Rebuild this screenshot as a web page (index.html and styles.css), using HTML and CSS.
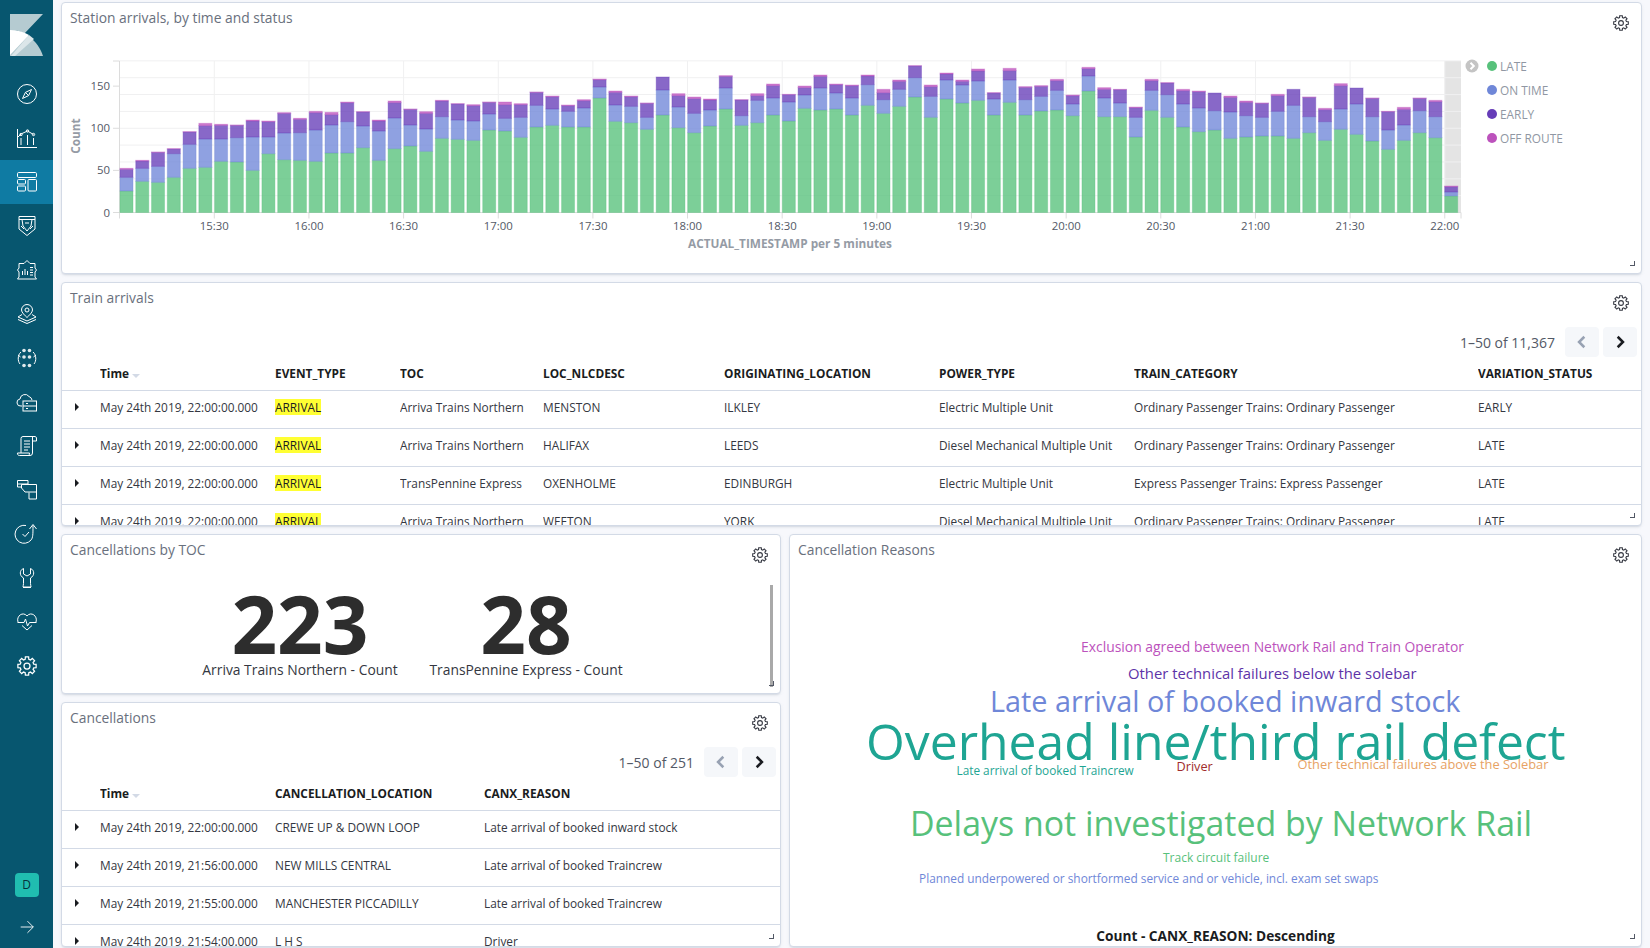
FILE: index.html
```html
<!DOCTYPE html>
<html>
<head>
  <meta charset="utf-8">
  <title>Train dashboard</title>
  <link rel="stylesheet" href="styles.css">
</head>
<body>
  <svg class="sprite" width="0" height="0">
    <symbol id="gear" viewBox="0 0 16 16">
      <path d="M6.55 2.59L6.71 .71H9.29L9.45 2.59L10.8 3.15L12.25 1.94L14.06 3.75L12.85 5.2L13.41 6.55L15.29 6.71V9.29L13.41 9.45L12.85 10.8L14.06 12.25L12.25 14.06L10.8 12.85L9.45 13.41L9.29 15.29H6.71L6.55 13.41L5.2 12.85L3.75 14.06L1.94 12.25L3.15 10.8L2.59 9.45L.71 9.29V6.71L2.59 6.55L3.15 5.2L1.94 3.75L3.75 1.94L5.2 3.15Z"/>
      <circle cx="8" cy="8" r="2.4"/>
    </symbol>
  </svg>

  <nav class="sidenav">
    <div class="logo">
      <svg width="33" height="42" viewBox="0 0 33 42">
        <path class="logo-a" d="M0 0H33L14.5 19.5C10 17 5 16 0 16Z"/>
        <path class="logo-a" d="M0 16C15 16 28 27 33 42H0Z"/>
        <path class="logo-b" d="M19 21L24 25L5 42H1Z"/>
        <path class="logo-c" d="M0 16C7 16 13 17.5 19 21L0 41Z"/>
      </svg>
    </div>
    <a class="nav-item"><svg viewBox="0 0 20 20"><circle cx="10" cy="10" r="9.5"/><path d="M14.5 5.5L11.6 11.6L5.5 14.5L8.4 8.4ZM8.4 8.4L11.6 11.6"/></svg></a>
    <a class="nav-item"><svg viewBox="0 0 20 20"><path d="M.5 1V19.5H20M1 9L4 6L10.5 3L16.5 6.5M4 10V17M10.5 7V17M16.5 10V17"/><circle cx="4" cy="6.5" r="1.2"/><circle cx="10.5" cy="3" r="1.2"/><circle cx="16.5" cy="6.5" r="1.2"/></svg></a>
    <a class="nav-item active"><svg viewBox="0 0 20 20"><rect x=".5" y=".5" width="19" height="5" rx="1.2"/><rect x=".5" y="7.5" width="8" height="4.5" rx="1"/><rect x=".5" y="14" width="8" height="5" rx="1"/><rect x="11" y="7.5" width="8.5" height="11.5" rx="1"/></svg></a>
    <a class="nav-item"><svg viewBox="0 0 20 20"><path d="M2 .5H18V13L10 19.5L2 13ZM2 3.5H18M5 3.5L6 10L10 15L14 10L15 3.5M4 10L7 13M16 10L13 13M8 7H12"/></svg></a>
    <a class="nav-item"><svg viewBox="0 0 20 20"><path d="M10 .5L13 3.5H18V8L19.5 10L18 12V17L19.5 19H.5L2 17V12L.5 10L2 8V3.5H7ZM5.5 11V15M8 9V15M10.5 11V15M13 7.5H16M13 10H16M13 12.5H16M13 15H16"/></svg></a>
    <a class="nav-item"><svg viewBox="0 0 20 20"><path d="M10 .5A5.5 5.5 0 0 1 15.5 6C15.5 8.5 12 11.5 10 13.5C8 11.5 4.5 8.5 4.5 6A5.5 5.5 0 0 1 10 .5Z"/><circle cx="10" cy="6" r="2"/><path d="M5 10.5L1 13L10 17L19 13L15 10.5M1 15.5L10 19.5L19 15.5"/></svg></a>
    <a class="nav-item"><svg viewBox="0 0 20 20"><path d="M4 4C.5 7 .5 13 3 16M16 4C19.5 7 19.5 13 17 16M3.5 9L1 7M16.5 9L19 7"/><g class="solid"><circle cx="7" cy="2.5" r="1.8"/><circle cx="12.5" cy="2.5" r="1.8"/><circle cx="7" cy="9" r="1.8"/><circle cx="12.5" cy="9" r="1.8"/><circle cx="7" cy="17.5" r="1.8"/><circle cx="12.5" cy="17.5" r="1.8"/></g></svg></a>
    <a class="nav-item"><svg viewBox="0 0 20 20"><path d="M5 14H4A3.5 3.5 0 0 1 3 7A5 5 0 0 1 12 4.5A4.5 4.5 0 0 1 15 8"/><rect x="6" y="9" width="13.5" height="10"/><path d="M6 14H19.5M9 11.5H11M9 16.5H11"/></svg></a>
    <a class="nav-item"><svg viewBox="0 0 20 20"><path d="M4 17V2.5A2 2 0 0 1 6 .5H18A2 2 0 0 1 19.5 3V5H15.5M15.5 .8V17A2.5 2.5 0 0 1 13 19.5H2.5A2 2 0 0 1 .5 17H12.5A2 2 0 0 0 13 19.5M7 5H13M7 8H13M7 11H13M7 14H11"/></svg></a>
    <a class="nav-item"><svg viewBox="0 0 20 20"><path d="M.5 .5H11V4H.5ZM.5 4V7H4M4.5 4.5H19.5V12H8L4.5 8ZM12 12.5V19H19.5V12"/></svg></a>
    <a class="nav-item"><svg viewBox="0 0 20 20"><path d="M9 1.5A9 9 0 1 0 14 16C16 14 16 10 16 1.5M12.5 5L16 .5L19.5 5M5.5 10L8 12.5L12 8"/></svg></a>
    <a class="nav-item"><svg viewBox="0 0 20 20"><path d="M6.5 .5C2.5 2 2 7.5 6.5 10V15.5C6.5 17 6 18 6 19H14C14 18 13.5 17 13.5 15.5V10C18 7.5 17.5 2 13.5 .5V6L10 8L6.5 6ZM6 19.5H14"/></svg></a>
    <a class="nav-item"><svg viewBox="0 0 20 20"><path d="M5 13.5L10 18L15 13.5M1 10C-1 4 6 -1 10 4C14 -1 21 4 19 10M.5 10.5H7L8.5 7L10.5 14L12.5 10.5H19.5"/></svg></a>
    <a class="nav-item"><svg viewBox="0 0 16 16"><use href="#gear"/></svg></a>
    <div class="nav-bottom">
      <span class="avatar">D</span>
      <a class="nav-item arrow"><svg viewBox="0 0 20 20"><path d="M3 10H17M10.5 3.5L17 10L10.5 16.5"/></svg></a>
    </div>
  </nav>

  <main class="dashboard">
    <section class="panel panel-chart">
      <h2 class="panel-title">Station arrivals, by time and status</h2>
      <svg class="gear"><use href="#gear"/></svg>
      <div class="chart-row">
        <svg id="arrivals-chart" class="chart"></svg>
        <div class="legend">
          <span class="legend-toggle"><svg viewBox="0 0 14 14" width="14" height="14"><circle cx="7" cy="7" r="6.5"/><path d="M5.5 3.7L8.8 7L5.5 10.3"/></svg></span>
          <ul class="legend-list">
            <li><i class="dot late"></i>LATE</li>
            <li><i class="dot ontime"></i>ON TIME</li>
            <li><i class="dot early"></i>EARLY</li>
            <li><i class="dot offroute"></i>OFF ROUTE</li>
          </ul>
        </div>
      </div>
      <span class="resize"></span>
    </section>

    <section class="panel panel-table">
      <h2 class="panel-title">Train arrivals</h2>
      <svg class="gear"><use href="#gear"/></svg>
      <div class="pager">
        <span>1–50 of 11,367</span>
        <button class="page-btn off"><svg viewBox="0 0 12 12"><path d="M8 1.5L3.5 6L8 10.5"/></svg></button>
        <button class="page-btn"><svg viewBox="0 0 12 12"><path d="M4 1.5L8.5 6L4 10.5"/></svg></button>
      </div>
      <table class="doc-table">
        <colgroup>
          <col class="c-toggle"><col class="c-time"><col class="c-event"><col class="c-toc"><col class="c-loc"><col class="c-orig"><col class="c-power"><col class="c-cat"><col>
        </colgroup>
        <thead>
          <tr><th></th><th>Time<i class="sort"></i></th><th>EVENT_TYPE</th><th>TOC</th><th>LOC_NLCDESC</th><th>ORIGINATING_LOCATION</th><th>POWER_TYPE</th><th>TRAIN_CATEGORY</th><th>VARIATION_STATUS</th></tr>
        </thead>
        <tbody>
          <tr><td><i class="caret"></i></td><td>May 24th 2019, 22:00:00.000</td><td><mark>ARRIVAL</mark></td><td>Arriva Trains Northern</td><td>MENSTON</td><td>ILKLEY</td><td>Electric Multiple Unit</td><td>Ordinary Passenger Trains: Ordinary Passenger</td><td>EARLY</td></tr>
          <tr><td><i class="caret"></i></td><td>May 24th 2019, 22:00:00.000</td><td><mark>ARRIVAL</mark></td><td>Arriva Trains Northern</td><td>HALIFAX</td><td>LEEDS</td><td>Diesel Mechanical Multiple Unit</td><td>Ordinary Passenger Trains: Ordinary Passenger</td><td>LATE</td></tr>
          <tr><td><i class="caret"></i></td><td>May 24th 2019, 22:00:00.000</td><td><mark>ARRIVAL</mark></td><td>TransPennine Express</td><td>OXENHOLME</td><td>EDINBURGH</td><td>Electric Multiple Unit</td><td>Express Passenger Trains: Express Passenger</td><td>LATE</td></tr>
          <tr><td><i class="caret"></i></td><td>May 24th 2019, 22:00:00.000</td><td><mark>ARRIVAL</mark></td><td>Arriva Trains Northern</td><td>WEETON</td><td>YORK</td><td>Diesel Mechanical Multiple Unit</td><td>Ordinary Passenger Trains: Ordinary Passenger</td><td>LATE</td></tr>
        </tbody>
      </table>
      <span class="resize"></span>
    </section>

    <div class="bottom-row">
      <div class="left-col">
        <section class="panel panel-metric">
          <h2 class="panel-title">Cancellations by TOC</h2>
          <svg class="gear"><use href="#gear"/></svg>
          <div class="metrics">
            <div class="metric"><div class="metric-value">223</div><div class="metric-label">Arriva Trains Northern - Count</div></div>
            <div class="metric"><div class="metric-value">28</div><div class="metric-label">TransPennine Express - Count</div></div>
          </div>
          <span class="scrollbar"></span>
          <span class="resize"></span>
        </section>

        <section class="panel panel-table panel-cancel">
          <h2 class="panel-title">Cancellations</h2>
          <svg class="gear"><use href="#gear"/></svg>
          <div class="pager">
            <span>1–50 of 251</span>
            <button class="page-btn off"><svg viewBox="0 0 12 12"><path d="M8 1.5L3.5 6L8 10.5"/></svg></button>
            <button class="page-btn"><svg viewBox="0 0 12 12"><path d="M4 1.5L8.5 6L4 10.5"/></svg></button>
          </div>
          <table class="doc-table">
            <colgroup>
              <col class="c-toggle"><col class="c-time"><col class="c-place"><col>
            </colgroup>
            <thead>
              <tr><th></th><th>Time<i class="sort"></i></th><th>CANCELLATION_LOCATION</th><th>CANX_REASON</th></tr>
            </thead>
            <tbody>
              <tr><td><i class="caret"></i></td><td>May 24th 2019, 22:00:00.000</td><td>CREWE UP &amp; DOWN LOOP</td><td>Late arrival of booked inward stock</td></tr>
              <tr><td><i class="caret"></i></td><td>May 24th 2019, 21:56:00.000</td><td>NEW MILLS CENTRAL</td><td>Late arrival of booked Traincrew</td></tr>
              <tr><td><i class="caret"></i></td><td>May 24th 2019, 21:55:00.000</td><td>MANCHESTER PICCADILLY</td><td>Late arrival of booked Traincrew</td></tr>
              <tr><td><i class="caret"></i></td><td>May 24th 2019, 21:54:00.000</td><td>L H S</td><td>Driver</td></tr>
            </tbody>
          </table>
          <span class="resize"></span>
        </section>
      </div>

      <section class="panel panel-cloud">
        <h2 class="panel-title">Cancellation Reasons</h2>
        <svg class="gear"><use href="#gear"/></svg>
        <span class="word w-exclusion">Exclusion agreed between Network Rail and Train Operator</span>
        <span class="word w-below">Other technical failures below the solebar</span>
        <span class="word w-inward">Late arrival of booked inward stock</span>
        <span class="word w-overhead">Overhead line/third rail defect</span>
        <span class="word w-crew">Late arrival of booked Traincrew</span>
        <span class="word w-driver">Driver</span>
        <span class="word w-above">Other technical failures above the Solebar</span>
        <span class="word w-delays">Delays not investigated by Network Rail</span>
        <span class="word w-track">Track circuit failure</span>
        <span class="word w-planned">Planned underpowered or shortformed service and or vehicle, incl. exam set swaps</span>
        <div class="cloud-label">Count - CANX_REASON: Descending</div>
        <span class="resize"></span>
      </section>
    </div>
  </main>

  <script src="chart.js"></script>
</body>
</html>
```

FILE: styles.css
```css
* { box-sizing: border-box; }

html, body { height: 100%; }

body {
  margin: 0;
  display: flex;
  overflow: hidden;
  background: #f7f8fc;
  color: #343741;
  font-family: "Open Sans", "Liberation Sans", sans-serif;
  font-size: 11.85px;
}

.sprite { position: absolute; }

/* side nav */
.sidenav {
  width: 53px;
  flex: none;
  display: flex;
  flex-direction: column;
  background: #07566f;
}
.logo { height: 72px; padding: 14px 0 0 10px; }
.logo svg { display: block; }
.logo-a { fill: #b5cbd1; }
.logo-b { fill: #dbe6e9; }
.logo-c { fill: #fff; }

.nav-item {
  height: 44px;
  flex: none;
  display: flex;
  align-items: center;
  justify-content: center;
}
.nav-item svg {
  width: 20px;
  height: 20px;
  fill: none;
  stroke: #fff;
  stroke-width: 1;
  overflow: visible;
}
.nav-item .solid { fill: #dfe9ec; stroke: none; }
.nav-item.active { background: #0f7ba3; }
.nav-bottom { margin-top: auto; display: flex; flex-direction: column; align-items: center; }
.avatar {
  width: 24px;
  height: 24px;
  margin-bottom: 9px;
  border-radius: 4px;
  background: #20bdb0;
  color: #07303c;
  font-size: 12px;
  line-height: 24px;
  text-align: center;
}
.arrow { height: 42px; }
.arrow svg { width: 18px; height: 18px; }

/* grid */
.dashboard {
  flex: 1;
  min-width: 0;
  display: flex;
  flex-direction: column;
  gap: 8px;
  padding: 2px 8px 0;
}
.bottom-row { flex: 1; min-height: 0; display: flex; gap: 8px; padding-bottom: 1px; }
.left-col { width: 720px; flex: none; display: flex; flex-direction: column; gap: 8px; }

.panel {
  position: relative;
  overflow: hidden;
  background: #fff;
  border: 1px solid #d3dae6;
  border-radius: 4px;
  box-shadow: 0 2px 2px -1px rgba(152, 162, 179, .3), 0 1px 5px -2px rgba(152, 162, 179, .3);
}
.panel-chart { height: 272px; flex: none; }
.dashboard > .panel-table { height: 244px; flex: none; }
.panel-metric { height: 160px; flex: none; }
.panel-cancel { flex: 1; min-height: 0; }
.panel-cloud { flex: 1; min-width: 0; }

.panel-title {
  margin: 0;
  padding: 5px 8px 0;
  height: 31px;
  color: #69707d;
  font-size: 13.85px;
  font-weight: 400;
  line-height: 20px;
}
.gear {
  position: absolute;
  top: 12px;
  right: 12px;
  width: 16px;
  height: 16px;
  fill: none;
  stroke: #343741;
  stroke-width: 1.1;
}
.resize {
  position: absolute;
  right: 6px;
  bottom: 7px;
  width: 5px;
  height: 5px;
  border-right: 1px solid #535966;
  border-bottom: 1px solid #535966;
}

/* chart */
.chart-row { display: flex; }
.chart { width: 1404px; height: 220px; flex: none; display: block; }
.chart .grid { stroke: #f0f0f1; stroke-width: 1; }
.chart .axis { stroke: #dcdcdc; stroke-width: 1; }
.chart .endzone { fill: #e4e4e4; }
.chart .bar { fill-opacity: .78; stroke-opacity: .35; stroke-width: 1; }
.chart text { font-family: "Open Sans", "Liberation Sans", sans-serif; font-size: 11.4px; fill: #535966; }
.chart .tick-y { text-anchor: end; }
.chart .tick-x { text-anchor: middle; }
.chart .title { font-size: 11.8px; font-weight: 700; fill: #959ba5; text-anchor: middle; }

.legend { display: flex; padding-top: 20px; margin-left: -1px; }
.legend-toggle { display: block; margin-top: 5px; height: 14px; }
.legend-toggle circle { fill: #c4c4c4; }
.legend-toggle path { fill: none; stroke: #fff; stroke-width: 2; }
.legend-list { margin: 0 0 0 8px; padding: 0; list-style: none; color: #9097a3; font-size: 11.85px; }
.legend-list li { height: 24px; display: flex; align-items: center; }
.dot { width: 10px; height: 10px; margin-right: 3px; border-radius: 50%; }
.late { background: #57c17b; }
.ontime { background: #6f87d8; }
.early { background: #663db8; }
.offroute { background: #bc52bc; }

/* doc tables */
.pager {
  height: 30px;
  margin-top: 13px;
  padding-right: 4px;
  display: flex;
  align-items: center;
  justify-content: flex-end;
  gap: 4px;
  color: #535966;
  font-size: 14px;
}
.pager span { margin-right: 6px; }
.page-btn {
  width: 34px;
  height: 30px;
  padding: 0;
  border: 0;
  border-radius: 4px;
  background: #f5f7fa;
  display: flex;
  align-items: center;
  justify-content: center;
}
.page-btn svg { width: 14px; height: 14px; fill: none; stroke: #1a1c21; stroke-width: 2.2; }
.page-btn.off svg { stroke: #98a2b3; }

.doc-table { width: 100%; table-layout: fixed; border-collapse: collapse; }
.c-toggle { width: 38px; }
.c-time { width: 175px; }
.c-event { width: 125px; }
.c-toc { width: 143px; }
.c-loc { width: 181px; }
.c-orig { width: 215px; }
.c-power { width: 195px; }
.c-cat { width: 344px; }
.c-place { width: 209px; }
.doc-table th,
.doc-table td { padding: 0; text-align: left; white-space: nowrap; overflow: hidden; }
.doc-table th {
  height: 33px;
  padding-bottom: 0;
  color: #1a1c21;
  font-weight: 700;
  border-bottom: 1px solid #d3dae6;
}
.doc-table td {
  height: 38px;
  padding-bottom: 5px;
  border-bottom: 1px solid #d3dae6;
}
.doc-table mark { background: #ffff33; color: #1a1c21; }
.caret {
  display: block;
  width: 0;
  height: 0;
  margin-left: 13px;
  border-left: 4px solid #1a1c21;
  border-top: 4px solid transparent;
  border-bottom: 4px solid transparent;
}
.sort {
  display: inline-block;
  margin-left: 3px;
  border-top: 4px solid #d3dae6;
  border-left: 4px solid transparent;
  border-right: 4px solid transparent;
}

/* metric */
.metrics { display: flex; justify-content: center; padding: 17px 16px 0 0; }
.metric { width: 226px; text-align: center; }
.metric-value { color: #2d2d2d; font-size: 80px; font-weight: 700; line-height: 80px; }
.metric-label { margin-top: -3px; color: #343741; font-size: 13.85px; line-height: 20px; }
.scrollbar {
  position: absolute;
  top: 50px;
  right: 7px;
  width: 3px;
  bottom: 6px;
  background: #a9a9a9;
}

/* word cloud */
.word { position: absolute; white-space: nowrap; line-height: 1; transform: translateY(-50%); }
.w-exclusion { left: 291px; top: 112px; font-size: 13.9px; color: #bc52bc; }
.w-below { left: 338px; top: 137.5px; font-size: 14.85px; color: #5d33a8; }
.w-inward { left: 200px; top: 166px; font-size: 28.8px; color: #6f87d8; }
.w-overhead { left: 76px; top: 206.5px; font-size: 49.85px; color: #1ea593; }
.w-crew { left: 166.5px; top: 236px; font-size: 11.8px; color: #1ea593; }
.w-driver { left: 386.5px; top: 231px; font-size: 12.7px; color: #a02c2c; }
.w-above { left: 507.5px; top: 229px; font-size: 12.85px; color: #e7a264; }
.w-delays { left: 120px; top: 289px; font-size: 33.9px; color: #57c17b; }
.w-track { left: 373px; top: 323px; font-size: 12px; color: #57c17b; }
.w-planned { left: 129px; top: 344px; font-size: 11.87px; color: #6f87d8; }
.cloud-label {
  position: absolute;
  left: 0;
  right: 0;
  bottom: 0;
  color: #1a1c21;
  font-size: 13.7px;
  font-weight: 700;
  line-height: 20px;
  text-align: center;
}
```

FILE: chart.js
```js
// top edge of each stack segment, read off at 3x above the plot: late, on time, early, off route
var bars = [
  [423,382,358,355],[394,355,333,331],[397,349,307,306],[382,311,297,296],[355,283,246,245],
  [352,267,227,220],[334,267,226,223],[336,263,226,225],[361,261,213,210],[311,261,215,213],
  [329,249,190,188],[331,248,208,205],[334,240,188,184],[309,225,194,187],[309,215,158,156],
  [293,228,186,185],[331,243,213,210],[296,204,158,153],[288,225,178,177],[304,237,190,185],
  [265,200,153,151],[268,210,162,161],[271,213,167,164],[240,192,157,156],[243,205,164,156],
  [262,202,164,161],[231,166,127,126],[226,177,140,138],[231,184,167,165],[231,174,152,149],
  [144,111,89,87],[214,165,127,123],[218,169,140,138],[238,202,160,159],[195,120,81,81],
  [233,171,137,131],[248,190,146,141],[228,180,150,147],[177,114,79,77],[226,197,150,149],
  [218,151,137,131],[195,144,107,102],[213,156,134,133],[175,135,113,108],[180,114,79,75],
  [177,129,104,102],[195,144,107,105],[166,104,78,75],[190,149,128,118],[169,118,94,90],
  [141,83,48,47],[202,139,110,105],[147,90,72,69],[159,105,94,90],[151,93,63,57],
  [195,147,129,128],[157,90,62,55],[195,149,112,110],[183,139,109,107],[180,121,92,88],
  [197,162,137,135],[123,78,56,52],[200,144,118,113],[200,159,119,118],[261,202,173,171],
  [181,121,92,88],[202,134,99,98],[231,162,122,118],[245,174,125,123],[240,182,129,129],
  [265,186,142,138],[261,197,157,153],[258,202,160,159],[258,184,137,133],[265,166,118,118],
  [248,200,142,141],[271,215,179,175],[238,177,107,101],[253,162,114,114],[273,200,145,144],
  [298,240,185,184],[271,225,178,172],[248,182,145,144],[263,200,155,151],[438,426,410,408]
];
var colors = ["#57c17b", "#6f87d8", "#663db8", "#bc52bc"];
var times = ["15:30","16:00","16:30","17:00","17:30","18:00","18:30","19:00","19:30","20:00","20:30","21:00","21:30","22:00"];

var svg = document.getElementById("arrivals-chart");
// the plot uses page coordinates, so the numbers below read straight off the screenshot
svg.setAttribute("viewBox", "62 34 1404 220");

var left = 119.5, right = 1461, top_ = 61, base = 212.5, slot = 15.77;

function add(name, attrs, text) {
  var el = document.createElementNS("http://www.w3.org/2000/svg", name);
  for (var k in attrs) el.setAttribute(k, attrs[k]);
  if (text) el.textContent = text;
  svg.appendChild(el);
  return el;
}

function line(x1, y1, x2, y2, cls) {
  add("line", { x1: x1, y1: y1, x2: x2, y2: y2, "class": cls });
}

add("rect", { x: 1444.5, y: top_, width: right - 1444.5, height: base - top_, "class": "endzone" });

for (var i = 0; i <= 9; i++) {
  var gy = base - i * 16.85;
  line(left, gy, right, gy, i ? "grid" : "axis");
}
times.forEach(function (t, i) {
  var x = 214.3 + i * 94.65;
  line(x, top_, x, base, "grid");
  line(x, base, x, base + 6, "axis");
  add("text", { x: x, y: 230, "class": "tick-x" }, t);
});

line(left, top_, left, base + 6, "axis");
line(right, base, right, base + 6, "axis");
line(113, top_, left, top_, "axis");
[0, 50, 100, 150].forEach(function (v) {
  var y = base - v * 0.8425;
  line(113, y, left, y, "axis");
  add("text", { x: 110, y: y + 4, "class": "tick-y" }, String(v));
});

bars.forEach(function (bar, i) {
  var x = left + i * slot + 0.5;
  var bottom = base;
  bar.forEach(function (edge, s) {
    var y = 50 + edge / 3;
    if (bottom - y > 0) {
      add("rect", { x: x, y: y, width: 13, height: bottom - y, fill: colors[s], stroke: colors[s], "class": "bar" });
    }
    bottom = y;
  });
});

add("text", { x: 0, y: 0, "class": "title", transform: "translate(80 136) rotate(-90)" }, "Count");
add("text", { x: 790, y: 248, "class": "title" }, "ACTUAL_TIMESTAMP per 5 minutes");
```
